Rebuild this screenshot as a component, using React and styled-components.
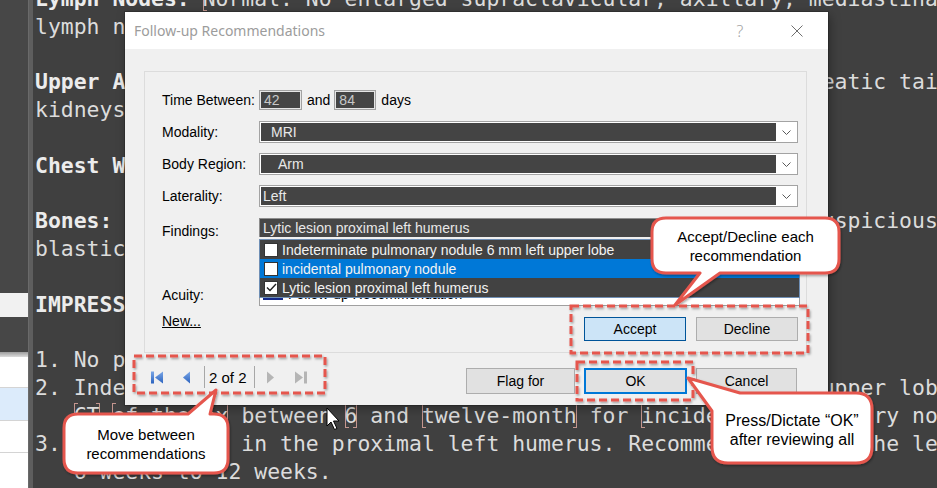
import React from 'react';
import styled, { createGlobalStyle } from 'styled-components';

const CORAL = '#e5574e';

const GlobalStyle = createGlobalStyle`
  html, body { margin: 0; padding: 0; background: #404040; }
  body { width: 937px; height: 488px; overflow: hidden; }
`;

const Stage = styled.div`
  position: relative;
  display: flex;
  width: 937px;
  height: 488px;
  overflow: hidden;
  background: #404040;
`;

/* ---------- left strip of the host application ---------- */

const SidePanel = styled.div`
  width: 28px;
  flex-shrink: 0;
  display: flex;
  flex-direction: column;
  background: #474747;
`;

const SideBand = styled.div`
  flex-shrink: 0;
  height: ${({ $h }) => $h}px;
  background: ${({ $bg }) => $bg};
  border-bottom: ${({ $line }) => ($line ? '1px solid #d4d4d4' : 'none')};
`;

const Divider = styled.div`
  width: 5px;
  flex-shrink: 0;
  background: #5e5e5e;
  border-left: 1px solid #6a6a6a;
  box-sizing: border-box;
`;

/* ---------- report editor ---------- */

const Editor = styled.div`
  flex: 1;
  margin-top: -15px;
  padding-left: 2px;
  font-family: 'DejaVu Sans Mono', 'Liberation Mono', monospace;
  font-size: 21.43px;
  line-height: 27.8px;
  color: #dcdcdc;
  white-space: pre;
  overflow: hidden;
`;

const Line = styled.div`
  height: 27.8px;
`;

const Head = styled.b`
  font-weight: bold;
  color: #ececec;
`;

const mark = '#c4968f';
const Field = styled.span`
  background:
    ${({ $open = true }) => ($open ? `
    linear-gradient(${mark}, ${mark}) left top / 1px 100% no-repeat,
    linear-gradient(${mark}, ${mark}) left top / 4px 1px no-repeat,
    linear-gradient(${mark}, ${mark}) left bottom / 4px 1px no-repeat,` : '')}
    ${({ $close = true }) => ($close ? `
    linear-gradient(${mark}, ${mark}) right top / 1px 100% no-repeat,
    linear-gradient(${mark}, ${mark}) right top / 4px 1px no-repeat,
    linear-gradient(${mark}, ${mark}) right bottom / 4px 1px no-repeat,` : '')}
    none;
`;

/* ---------- dialog ---------- */

const Dialog = styled.div`
  position: absolute;
  left: 125px;
  top: 12px;
  width: 703px;
  height: 393px;
  display: flex;
  flex-direction: column;
  background: #f0f0f0;
  box-shadow: 0 0 0 1px rgba(0, 0, 0, 0.18), 2px 3px 10px rgba(0, 0, 0, 0.35);
  font-family: 'Liberation Sans', Arial, sans-serif;
  font-size: 14px;
  color: #000;
  z-index: 1;
`;

const TitleBar = styled.div`
  height: 37px;
  flex-shrink: 0;
  display: flex;
  align-items: center;
  padding: 0 8px 0 9px;
  background: #fff;
`;

const Title = styled.div`
  flex: 1;
  font-family: 'Noto Sans', 'Open Sans', sans-serif;
  font-size: 14px;
  color: #9c9c9c;
`;

const TitleButton = styled.div`
  width: 46px;
  height: 37px;
  margin-left: ${({ $ml }) => $ml || 0}px;
  display: flex;
  align-items: center;
  justify-content: center;
  font-family: 'Noto Sans', sans-serif;
  font-size: 16px;
  font-weight: 300;
  color: #a3a3a3;
`;

const Body = styled.div`
  flex: 1;
  display: flex;
  flex-direction: column;
  padding: 22px 21px 0 19px;
`;

const GroupBox = styled.div`
  height: 282px;
  box-sizing: border-box;
  border: 1px solid #dcdcdc;
  padding: 18px 8px 0 17px;
`;

const Row = styled.div`
  position: relative;
  display: flex;
  align-items: ${({ $align }) => $align || 'center'};
  height: ${({ $h }) => $h}px;
  margin-top: ${({ $mt }) => $mt || 0}px;
`;

const Label = styled.div`
  width: 97px;
  flex-shrink: 0;
  align-self: ${({ $top }) => ($top !== undefined ? 'flex-start' : 'center')};
  padding-top: ${({ $top }) => $top || 0}px;
  white-space: nowrap;
`;

const NumInput = styled.div`
  width: ${({ $w }) => $w}px;
  height: 20px;
  box-sizing: border-box;
  border: 1px solid #a2a2a2;
  box-shadow: inset 0 0 0 1px #e6e6e6;
  background: #454545;
  color: #c8c8c8;
  padding-left: 4px;
  line-height: 18px;
`;

const Word = styled.span`
  margin: 0 ${({ $mr }) => $mr || 0}px 0 ${({ $ml }) => $ml || 0}px;
`;

const Select = styled.div`
  flex: 1;
  display: flex;
  height: 22px;
  box-sizing: border-box;
  border: 1px solid #a3a3a3;
  background: #fff;
`;

const SelectValue = styled.div`
  flex: 1;
  display: flex;
  align-items: center;
  margin: 1px 0 1px 1px;
  padding-left: ${({ $indent }) => $indent}px;
  background: #444;
  color: #e8e8e8;
`;

const ChevronBox = styled.div`
  width: 21px;
  display: flex;
  align-items: center;
  justify-content: center;
`;

const Combo = styled.div`
  flex: 1;
  height: 19px;
  box-sizing: border-box;
  border: 1px solid #8d8d8d;
  border-bottom: none;
  background: #464646;
  color: #e8e8e8;
  padding-left: 3px;
  line-height: 18px;
`;

const DropList = styled.div`
  position: absolute;
  left: 97px;
  right: -2px;
  top: 21px;
  z-index: 2;
  border: 1px solid #6f8fb5;
  background: #424242;
`;

const DropItem = styled.div`
  display: flex;
  align-items: center;
  height: 19px;
  padding-left: 4px;
  color: #f2f2f2;
  background: ${({ $selected }) => ($selected ? '#0078d7' : 'transparent')};
`;

const CheckBox = styled.span`
  width: 14px;
  height: 14px;
  margin-right: 4px;
  box-sizing: border-box;
  border: 1px solid #333;
  background: #fff;
  display: flex;
  align-items: center;
  justify-content: center;
`;

const ListBox = styled.div`
  flex: 1;
  margin-right: -2px;
  height: 22px;
  box-sizing: border-box;
  border: 1px solid #a0a0a0;
  background: #fff;
  padding: 1px 0 0 3px;
`;

const ListItem = styled.div`
  display: flex;
  align-items: center;
  height: 16px;
  color: #000;
`;

const Swatch = styled.span`
  width: 20px;
  height: 12px;
  margin-right: 5px;
  background: #152a8a;
`;

const LinkText = styled.span`
  text-decoration: underline;
  line-height: 16px;
`;

const Actions = styled.div`
  margin-left: auto;
  margin-top: 4px;
  display: flex;
  gap: 10px;
`;

const Button = styled.div`
  width: ${({ $w }) => $w}px;
  height: ${({ $h }) => $h}px;
  box-sizing: border-box;
  display: flex;
  align-items: center;
  justify-content: center;
  background: ${({ $accent }) => ($accent ? '#cce4f7' : '#e1e1e1')};
  border: ${({ $accent, $default }) => ($default ? '2px solid #0078d7' : $accent ? '1px solid #005499' : '1px solid #adadad')};
`;

const Footer = styled.div`
  display: flex;
  align-items: flex-start;
  padding-right: 10px;
`;

const Nav = styled.div`
  display: flex;
  align-items: center;
  height: 22px;
  margin-top: 13px;
`;

const NavButton = styled.div`
  width: 21px;
  height: 22px;
  margin-left: ${({ $ml }) => $ml || 0}px;
  display: flex;
  align-items: center;
  justify-content: center;
`;

const NavSep = styled.div`
  width: 1px;
  height: 22px;
  margin-left: ${({ $ml }) => $ml || 0}px;
  background: #a7a7a7;
`;

const Counter = styled.div`
  margin-left: 4px;
  font-size: 15px;
  white-space: nowrap;
`;

const FooterButtons = styled.div`
  margin-left: auto;
  margin-top: 15px;
  display: flex;
  gap: 9px;
`;

/* ---------- annotation overlay ---------- */

const Overlay = styled.svg`
  position: absolute;
  left: 0;
  top: 0;
  z-index: 3;
  pointer-events: none;
`;

const CalloutText = styled.div`
  position: absolute;
  left: ${({ $x }) => $x}px;
  top: ${({ $y }) => $y}px;
  width: ${({ $w }) => $w}px;
  height: ${({ $h }) => $h}px;
  z-index: 4;
  display: flex;
  align-items: center;
  justify-content: center;
  text-align: center;
  font-family: 'Liberation Sans', Arial, sans-serif;
  font-size: ${({ $size }) => $size || 15}px;
  line-height: 19px;
  color: #000;
`;

const Chevron = () => (
  <svg width="9" height="5" viewBox="0 0 9 5">
    <polyline points="0.5,0.5 4.5,4.5 8.5,0.5" fill="none" stroke="#5a5a5a" strokeWidth="1" />
  </svg>
);

const Check = () => (
  <svg width="11" height="9" viewBox="0 0 11 9">
    <polyline points="1,4.5 4,7.5 10,1" fill="none" stroke="#222" strokeWidth="1.4" />
  </svg>
);

const NavIcon = ({ dir, end, active }) => {
  const id = `g${dir}${end ? 'e' : ''}`;
  const fill = active ? `url(#${id})` : '#b5b5b5';
  const left = dir === 'left';
  return (
    <svg width="14" height="13" viewBox="0 0 14 13">
      <defs>
        <linearGradient id={id} x1="0" y1="0" x2="0" y2="1">
          <stop offset="0" stopColor="#7aa6e6" />
          <stop offset="1" stopColor="#2b63bf" />
        </linearGradient>
      </defs>
      {left && end && <rect x="1" y="0.5" width="3" height="12" fill={fill} />}
      {left && <polygon points={end ? '13,0.5 5,6.5 13,12.5' : '10,0.5 3,6.5 10,12.5'} fill={fill} />}
      {!left && <polygon points={end ? '1,0.5 9,6.5 1,12.5' : '4,0.5 11,6.5 4,12.5'} fill={fill} />}
      {!left && end && <rect x="10" y="0.5" width="3" height="12" fill={fill} />}
    </svg>
  );
};

const bubbleOne = 'M666 218 H825 Q839 218 839 232 V259 Q839 273 825 273 H720 L675 305 L700 273 H666 Q652 273 652 259 V232 Q652 218 666 218 Z';
const bubbleTwo = 'M78 414 H188 L216 390 L210 414 H214 Q228 414 228 428 V459 Q228 473 214 473 H78 Q64 473 64 459 V428 Q64 414 78 414 Z';
const bubbleThree = 'M740 393 H856 Q872 393 872 409 V447 Q872 463 856 463 H728 Q712 463 712 447 V411 L688 378 Z';

const dashed = [
  { x: 134, y: 356, w: 191, h: 37 },
  { x: 571, y: 306, w: 237, h: 47 },
  { x: 577, y: 362, w: 116, h: 38 },
];

const Annotations = () => (
  <Overlay width="937" height="488" viewBox="0 0 937 488">
    <defs>
      <filter id="shade" x="-10%" y="-10%" width="130%" height="140%">
        <feDropShadow dx="1" dy="1.5" stdDeviation="1.2" floodColor="#000" floodOpacity="0.35" />
      </filter>
    </defs>
    <g filter="url(#shade)">
      {dashed.map((r) => (
        <rect key={r.x} x={r.x} y={r.y} width={r.w} height={r.h} fill="none" stroke={CORAL} strokeWidth="3" strokeDasharray="8 4" />
      ))}
      <path d={bubbleOne} fill="#fff" stroke={CORAL} strokeWidth="3" strokeLinejoin="round" />
      <path d={bubbleTwo} fill="#fff" stroke={CORAL} strokeWidth="3" strokeLinejoin="round" />
      <path d={bubbleThree} fill="#fff" stroke={CORAL} strokeWidth="3" strokeLinejoin="round" />
    </g>
    <path
      d="M327 408 L327 426 L331 422 L334.5 429.5 L337 428.5 L333.5 421 L339 421 Z"
      fill="#fff"
      stroke="#000"
      strokeWidth="1"
      strokeLinejoin="round"
    />
  </Overlay>
);

const App = () => (
  <>
    <GlobalStyle />
    <Stage>
      <SidePanel>
        <SideBand $h={293} $bg="#474747" />
        <SideBand $h={24} $bg="#f1f1f1" />
        <SideBand $h={35} $bg="#474747" />
        <SideBand $h={5} $bg="linear-gradient(#9c9c9c, #dcdcdc)" />
        <SideBand $h={30} $bg="#ffffff" $line />
        <SideBand $h={32} $bg="#dcebfb" $line />
        <SideBand $h={31} $bg="#ffffff" $line />
        <SideBand $h={40} $bg="#ffffff" />
      </SidePanel>
      <Divider />
      <Editor>
        <Line><Head>Lymph Nodes:</Head> <Field $close={false}>Normal. No enlarged supraclavicular, axillary, mediastinal</Field></Line>
        <Line><Field $open={false}>lymph nodes.</Field></Line>
        <Line> </Line>
        <Line><Head>Upper Abdomen:</Head> Unremarkable liver, spleen, adrenals and pancreatic tail and</Line>
        <Line>kidneys.</Line>
        <Line> </Line>
        <Line><Head>Chest Wall:</Head> Unremarkable.</Line>
        <Line> </Line>
        <Line><Head>Bones:</Head> Lytic lesion in the proximal left humerus.  No other suspicious</Line>
        <Line>blastic lesions.</Line>
        <Line> </Line>
        <Line><Head>IMPRESSION:</Head></Line>
        <Line> </Line>
        <Line>1. No pleural effusion.</Line>
        <Line>2. Indeterminate pulmonary nodule measuring 6 mm in the left upper lobe.</Line>
        <Line>   <Field>CT</Field> <Field>of thorax</Field> between <Field>6</Field> and <Field>twelve-month</Field> for <Field>incidental pulmonary nodule</Field>.</Line>
        <Line>3. Lytic lesion in the proximal left humerus. Recommend MRI for the left</Line>
        <Line>   6 weeks to 12 weeks.</Line>
      </Editor>

      <Dialog>
        <TitleBar>
          <Title>Follow-up Recommendations</Title>
          <TitleButton>?</TitleButton>
          <TitleButton $ml={11}>
            <svg width="12" height="12" viewBox="0 0 12 12">
              <path d="M0.5 0.5 L11.5 11.5 M11.5 0.5 L0.5 11.5" stroke="#6e6e6e" strokeWidth="1" />
            </svg>
          </TitleButton>
        </TitleBar>
        <Body>
          <GroupBox>
            <Row $h={20}>
              <Label>Time Between:</Label>
              <NumInput $w={43}>42</NumInput>
              <Word $ml={5} $mr={4}>and</Word>
              <NumInput $w={42}>84</NumInput>
              <Word $ml={5}>days</Word>
            </Row>
            <Row $h={22} $mt={11}>
              <Label>Modality:</Label>
              <Select>
                <SelectValue $indent={10}>MRI</SelectValue>
                <ChevronBox><Chevron /></ChevronBox>
              </Select>
            </Row>
            <Row $h={22} $mt={10}>
              <Label>Body Region:</Label>
              <Select>
                <SelectValue $indent={17}>Arm</SelectValue>
                <ChevronBox><Chevron /></ChevronBox>
              </Select>
            </Row>
            <Row $h={22} $mt={10}>
              <Label>Laterality:</Label>
              <Select>
                <SelectValue $indent={2}>Left</SelectValue>
                <ChevronBox><Chevron /></ChevronBox>
              </Select>
            </Row>
            <Row $h={19} $mt={11}>
              <Label $top={5}>Findings:</Label>
              <Combo>Lytic lesion proximal left humerus</Combo>
              <DropList>
                <DropItem><CheckBox />Indeterminate pulmonary nodule 6 mm left upper lobe</DropItem>
                <DropItem $selected><CheckBox />incidental pulmonary nodule</DropItem>
                <DropItem><CheckBox><Check /></CheckBox>Lytic lesion proximal left humerus</DropItem>
              </DropList>
            </Row>
            <Row $h={22} $mt={47}>
              <Label>Acuity:</Label>
              <ListBox>
                <ListItem><Swatch />Follow-up Recommendation</ListItem>
              </ListBox>
            </Row>
            <Row $h={28} $mt={7} $align="flex-start">
              <LinkText>New...</LinkText>
              <Actions>
                <Button $w={102} $h={24} $accent>Accept</Button>
                <Button $w={102} $h={24}>Decline</Button>
              </Actions>
            </Row>
          </GroupBox>
          <Footer>
            <Nav>
              <NavButton $ml={2}><NavIcon dir="left" end active /></NavButton>
              <NavButton $ml={9}><NavIcon dir="left" active /></NavButton>
              <NavSep $ml={7} />
              <Counter>2 of 2</Counter>
              <NavSep $ml={7} />
              <NavButton $ml={5}><NavIcon dir="right" /></NavButton>
              <NavButton $ml={10}><NavIcon dir="right" end /></NavButton>
            </Nav>
            <FooterButtons>
              <Button $w={109} $h={26}>Flag for</Button>
              <Button $w={103} $h={26} $default>OK</Button>
              <Button $w={101} $h={26}>Cancel</Button>
            </FooterButtons>
          </Footer>
        </Body>
      </Dialog>

      <Annotations />
      <CalloutText $x={654} $y={220} $w={183} $h={52}>Accept/Decline each<br />recommendation</CalloutText>
      <CalloutText $x={66} $y={416} $w={160} $h={56}>Move between<br />recommendations</CalloutText>
      <CalloutText $x={714} $y={398} $w={156} $h={64} $size={16}>Press/Dictate “OK”<br />after reviewing all</CalloutText>
    </Stage>
  </>
);

export default App;
